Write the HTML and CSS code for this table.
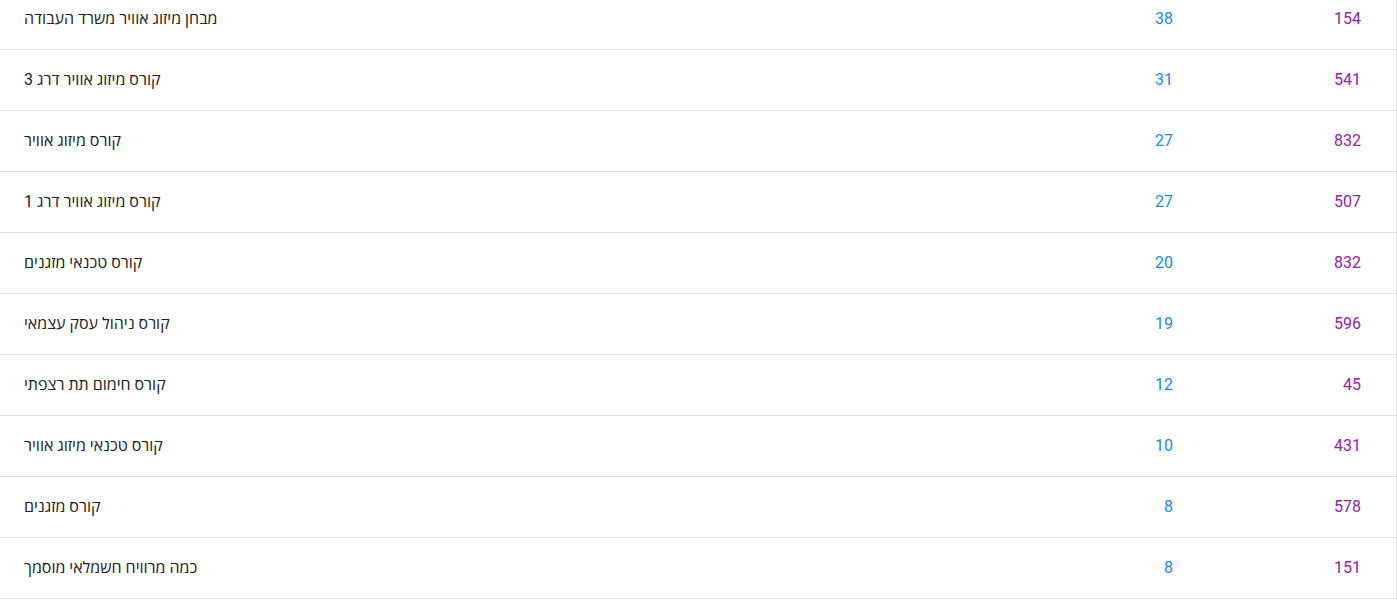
FILE: index.html
```html
<!DOCTYPE html>
<html lang="he">
<head>
<meta charset="utf-8">
<link rel="stylesheet" href="styles.css">
</head>
<body>
<div class="table">
  <div class="row"><div class="cell q">מבחן מיזוג אוויר משרד העבודה</div><div class="cell n blue">38</div><div class="cell n purple">154</div></div>
  <div class="row"><div class="cell q">קורס מיזוג אוויר דרג 3</div><div class="cell n blue">31</div><div class="cell n purple">541</div></div>
  <div class="row"><div class="cell q">קורס מיזוג אוויר</div><div class="cell n blue">27</div><div class="cell n purple">832</div></div>
  <div class="row"><div class="cell q">קורס מיזוג אוויר דרג 1</div><div class="cell n blue">27</div><div class="cell n purple">507</div></div>
  <div class="row"><div class="cell q">קורס טכנאי מזגנים</div><div class="cell n blue">20</div><div class="cell n purple">832</div></div>
  <div class="row"><div class="cell q">קורס ניהול עסק עצמאי</div><div class="cell n blue">19</div><div class="cell n purple">596</div></div>
  <div class="row"><div class="cell q">קורס חימום תת רצפתי</div><div class="cell n blue">12</div><div class="cell n purple">45</div></div>
  <div class="row"><div class="cell q">קורס טכנאי מיזוג אוויר</div><div class="cell n blue">10</div><div class="cell n purple">431</div></div>
  <div class="row"><div class="cell q">קורס מזגנים</div><div class="cell n blue">8</div><div class="cell n purple">578</div></div>
  <div class="row"><div class="cell q">כמה מרוויח חשמלאי מוסמך</div><div class="cell n blue">8</div><div class="cell n purple">151</div></div>
</div>
</body>
</html>
```
FILE: styles.css
```css
html, body {
  margin: 0;
  padding: 0;
  background: #fff;
  overflow: hidden;
}
body {
  font-family: Roboto, "Open Sans", sans-serif;
  font-size: 16px;
  color: #212121;
}
.table {
  width: 1396px;
  border-right: 1px solid #e0e0e0;
  margin-top: -11px;
}
.row {
  display: flex;
  align-items: center;
  height: 60px;
  border-bottom: 1px solid #e0e0e0;
}
.cell {
  line-height: 20px;
}
.q {
  flex: 1;
  padding-left: 24px;
  direction: rtl;
  text-align: left;
  unicode-bidi: plaintext;
}
.n {
  width: 188px;
  box-sizing: border-box;
  padding-right: 35px;
  text-align: right;
}
.blue { color: #1e88e5; }
.purple { color: #8e24aa; }
```
